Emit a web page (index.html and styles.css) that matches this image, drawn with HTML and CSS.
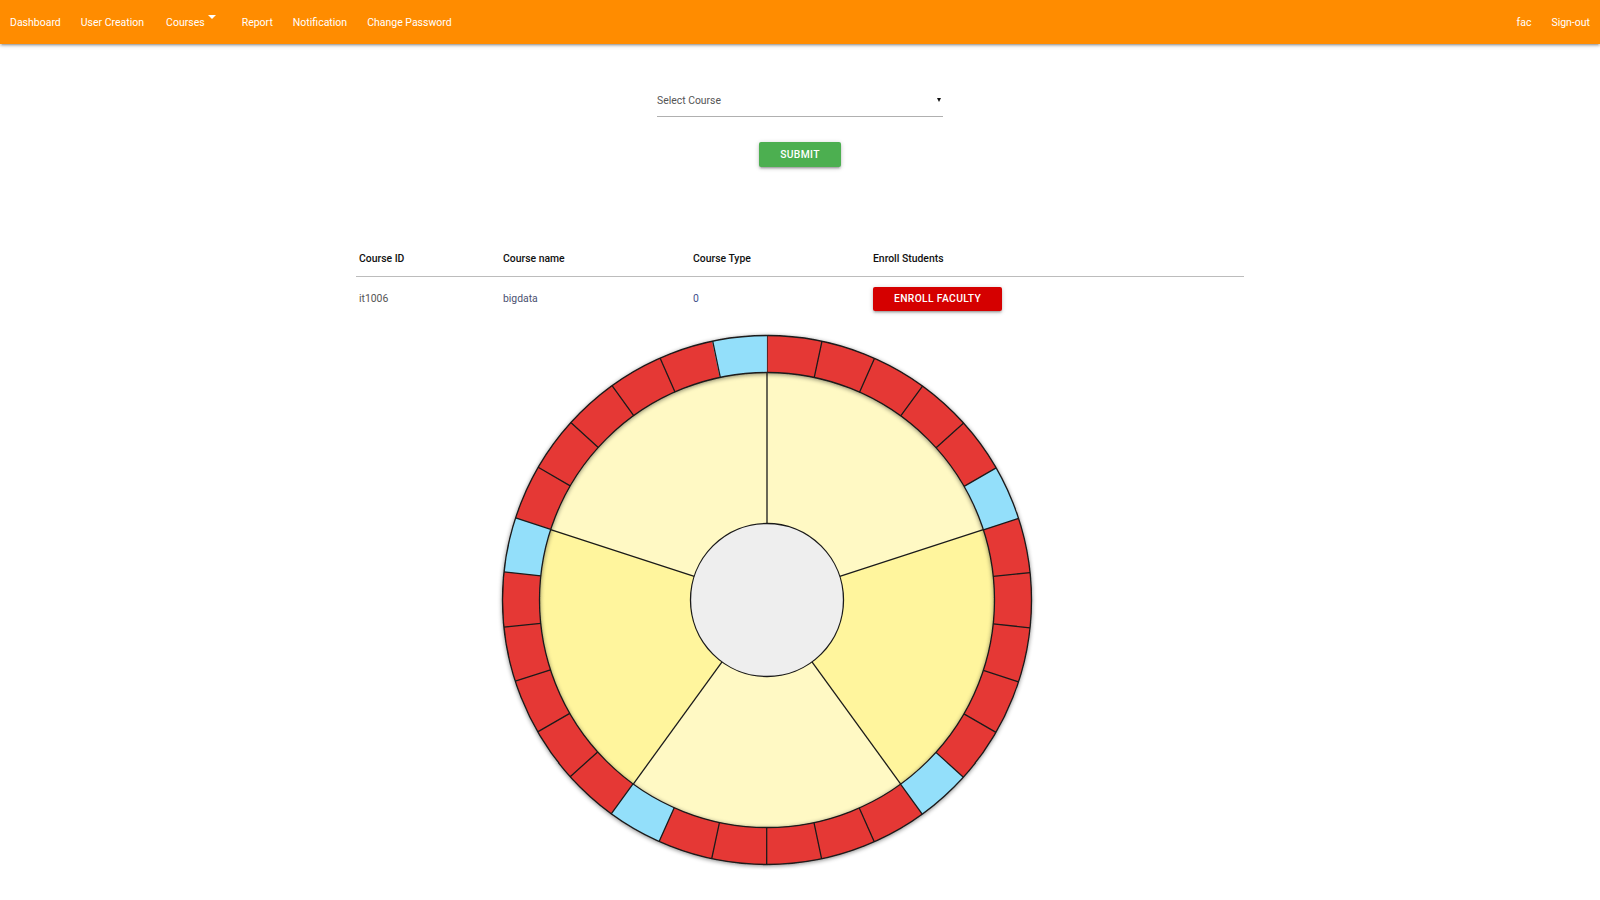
FILE: index.html
```html
<!DOCTYPE html>
<html lang="en">
<head>
<meta charset="utf-8">
<title>Courses</title>
<link rel="stylesheet" href="styles.css">
</head>
<body>
<nav class="navbar">
  <ul class="nav-list">
    <li><a class="nav-link">Dashboard</a></li>
    <li><a class="nav-link">User Creation</a></li>
    <li><a class="nav-link nav-dropdown">Courses<span class="nav-caret"></span></a></li>
    <li><a class="nav-link">Report</a></li>
    <li><a class="nav-link">Notification</a></li>
    <li><a class="nav-link">Change Password</a></li>
  </ul>
  <ul class="nav-list">
    <li><a class="nav-link">fac</a></li>
    <li><a class="nav-link">Sign-out</a></li>
  </ul>
</nav>

<main class="page">
  <div class="select-field">
    <span class="select-label">Select Course</span>
    <span class="select-caret"></span>
  </div>

  <div class="submit-row">
    <button class="btn btn-green">SUBMIT</button>
  </div>

  <table class="course-table">
    <thead>
      <tr>
        <th class="col-id">Course ID</th>
        <th class="col-name">Course name</th>
        <th class="col-type">Course Type</th>
        <th class="col-enroll">Enroll Students</th>
      </tr>
    </thead>
    <tbody>
      <tr>
        <td class="cell-id">it1006</td>
        <td class="cell-name">bigdata</td>
        <td class="cell-type">0</td>
        <td><button class="btn btn-red">ENROLL FACULTY</button></td>
      </tr>
    </tbody>
  </table>

  <div class="chart-wrap">
    <svg class="chart" width="600" height="540" viewBox="0 0 600 540" xmlns="http://www.w3.org/2000/svg">
      <defs>
        <filter id="ringShadow" x="-10%" y="-10%" width="120%" height="120%">
          <feDropShadow dx="0" dy="1" stdDeviation="2" flood-color="#000" flood-opacity="0.45"/>
        </filter>
      </defs>
      <!-- wedges -->
      <circle cx="300" cy="270" r="227.5" fill="#fff9c4"/>
      <circle cx="300" cy="270" r="113.75" fill="none" stroke="#fff59d" stroke-width="227.5"
              stroke-dasharray="142.942 142.942 142.942 285.884" transform="rotate(-18 300 270)"/>
      <g stroke="#1a1a1a" stroke-width="1.3">
        <line x1="300" y1="193.5" x2="300" y2="42.5"/>
        <line x1="300" y1="193.5" x2="300" y2="42.5" transform="rotate(72 300 270)"/>
        <line x1="300" y1="193.5" x2="300" y2="42.5" transform="rotate(144 300 270)"/>
        <line x1="300" y1="193.5" x2="300" y2="42.5" transform="rotate(216 300 270)"/>
        <line x1="300" y1="193.5" x2="300" y2="42.5" transform="rotate(288 300 270)"/>
      </g>
      <circle cx="300" cy="270" r="76.5" fill="#eeeeee" stroke="#1a1a1a" stroke-width="1.3"/>
      <!-- outer ring -->
      <g filter="url(#ringShadow)">
        <circle cx="300" cy="270" r="246" fill="none" stroke="#e53935" stroke-width="37"/>
        <circle cx="300" cy="270" r="246" fill="none" stroke="#93dffa" stroke-width="37"
                stroke-dasharray="51.522 257.61" transform="rotate(-102 300 270)"/>
        <circle cx="300" cy="270" r="246" fill="none" stroke="#1a1a1a" stroke-width="37"
                stroke-dasharray="1.3 50.222" stroke-dashoffset="0.65" transform="rotate(-90 300 270)"/>
        <circle cx="300" cy="270" r="264.5" fill="none" stroke="#1a1a1a" stroke-width="1.3"/>
        <circle cx="300" cy="270" r="227.5" fill="none" stroke="#1a1a1a" stroke-width="1.3"/>
      </g>
    </svg>
  </div>
</main>
</body>
</html>
```

FILE: styles.css
```css
* {
  box-sizing: border-box;
}

html, body {
  margin: 0;
  padding: 0;
  background: #ffffff;
}

body {
  font-family: Roboto, "Liberation Sans", Arial, sans-serif;
  color: rgba(0, 0, 0, 0.87);
}

/* ---------- navbar ---------- */
.navbar {
  height: 44px;
  background: #ff8c00;
  display: flex;
  justify-content: space-between;
  align-items: stretch;
  box-shadow: 0 2px 2px 0 rgba(0, 0, 0, 0.14), 0 3px 1px -2px rgba(0, 0, 0, 0.12), 0 1px 5px 0 rgba(0, 0, 0, 0.2);
  position: relative;
  z-index: 2;
}

.nav-list {
  list-style: none;
  margin: 0;
  padding: 0;
  display: flex;
}

.nav-link {
  display: flex;
  align-items: center;
  height: 44px;
  padding: 1px 10px 0;
  color: #ffffff;
  font-size: 10.5px;
  text-decoration: none;
  cursor: pointer;
}

.nav-dropdown {
  padding-left: 12px;
}

.nav-caret {
  display: inline-block;
  width: 0;
  height: 0;
  border-left: 4px solid transparent;
  border-right: 4px solid transparent;
  border-top: 4px solid #ffffff;
  margin-left: 3px;
  margin-right: 6px;
  align-self: flex-start;
  margin-top: 14px;
}

/* ---------- select ---------- */
.select-field {
  width: 286px;
  height: 31px;
  margin: 42px auto 0;
  border-bottom: 1px solid #b0b0b0;
  display: flex;
  align-items: center;
  justify-content: space-between;
  padding-right: 2px;
  padding-bottom: 2px;
}

.select-label {
  font-size: 10.4px;
  color: #555555;
}

.select-caret {
  width: 0;
  height: 0;
  border-left: 2.5px solid transparent;
  border-right: 2.5px solid transparent;
  border-top: 4px solid #111111;
}

/* ---------- buttons ---------- */
.submit-row {
  display: flex;
  justify-content: center;
  margin-top: 25px;
}

.btn {
  border: none;
  border-radius: 2px;
  color: #ffffff;
  font-family: Roboto, "Liberation Sans", Arial, sans-serif;
  font-size: 10.3px;
  font-weight: 500;
  letter-spacing: 0.35px;
  text-transform: uppercase;
  box-shadow: 0 2px 2px 0 rgba(0, 0, 0, 0.14), 0 3px 1px -2px rgba(0, 0, 0, 0.12), 0 1px 5px 0 rgba(0, 0, 0, 0.2);
  cursor: pointer;
}

.btn-green {
  background: #4caf50;
  height: 25px;
  padding: 0 21px;
}

.btn-red {
  background: #d50000;
  height: 24px;
  padding: 0 21px;
  vertical-align: middle;
}

/* ---------- table ---------- */
.course-table {
  width: 888px;
  margin: 73.5px auto 0;
  border-collapse: collapse;
  font-size: 10.4px;
  line-height: 15px;
}

.course-table thead tr {
  border-bottom: 1px solid rgba(0, 0, 0, 0.14);
}

.course-table th {
  text-align: left;
  font-weight: 500;
  color: #111111;
  padding: 10px 3px;
}

.course-table td {
  padding: 10px 3px;
  vertical-align: middle;
}

.col-id { width: 144px; }
.col-name { width: 190px; }
.col-type { width: 180px; }

.cell-id { color: #555555; }
.cell-name { color: #4b5170; }
.cell-type { color: #3f4f8a; }

/* ---------- chart ---------- */
.chart-wrap {
  display: flex;
  justify-content: center;
  padding-right: 66px;
  margin-top: 9px;
}

.chart {
  display: block;
  overflow: visible;
}
```
